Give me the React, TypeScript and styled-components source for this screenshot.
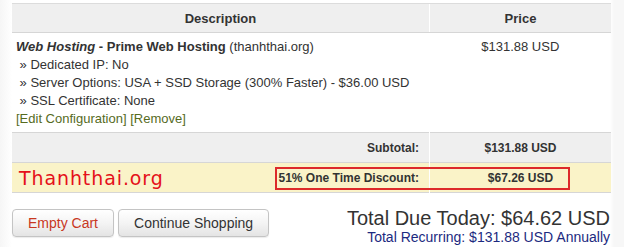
import React from "react";
import styled, { createGlobalStyle } from "styled-components";

const Global = createGlobalStyle`
  html, body { margin: 0; padding: 0; }
  body {
    font-family: "Liberation Sans", Arial, sans-serif;
    color: #333;
    background: linear-gradient(to right, #f6f6f6 0, #ffffff 12px, #ffffff 610px, #f7f7f7 614px);
    min-height: 247px;
  }
`;

const Page = styled.div`
  width: 598px;
  padding: 3px 0 0 12px;
`;

const Table = styled.table`
  width: 598px;
  border-collapse: collapse;
  table-layout: fixed;
  font-size: 13px;
`;

const Th = styled.th<{ $w: number }>`
  width: ${(p) => p.$w}px;
  background: #efefef;
  border-top: 1px solid #dcdcdc;
  border-bottom: 1px solid #d6d6d6;
  border-left: 1px solid #fff;
  height: 28px;
  padding: 0;
  font-size: 13px;
  font-weight: bold;
  color: #333;
  text-align: center;
  &:first-child { border-left: none; }
`;

const ItemCell = styled.td`
  padding: 5px 4px 4px 4px;
  line-height: 18px;
  vertical-align: top;
  color: #333;
`;

const PriceCell = styled.td`
  padding: 5px 0 4px 0;
  line-height: 18px;
  text-align: center;
  vertical-align: top;
  color: #333;
`;

const Line = styled.div``;

const Links = styled.div`
  color: #566b1e;
`;

const TotalRow = styled.tr<{ $bg: string }>`
  background: ${(p) => p.$bg};
  border-top: 1px solid #d6d6d6;
  border-bottom: 1px solid #d6d6d6;
`;

const LabelCell = styled.td`
  height: 29px;
  padding: 0 10px 0 7px;
  text-align: right;
  font-size: 12px;
  font-weight: bold;
  color: #333;
  vertical-align: middle;
`;

const AmountCell = styled.td`
  height: 29px;
  padding: 0;
  text-align: center;
  font-size: 12px;
  font-weight: bold;
  color: #333;
  border-left: 1px solid #fff;
  vertical-align: middle;
`;

const LabelInner = styled.div`
  display: flex;
  align-items: center;
  justify-content: space-between;
  position: relative;
  height: 24px;
`;

const Brand = styled.span`
  font-family: "DejaVu Sans", Verdana, sans-serif;
  font-weight: normal;
  font-size: 19px;
  letter-spacing: 0.9px;
  color: #e5101a;
  line-height: 24px;
`;

const Highlight = styled.div`
  position: absolute;
  box-sizing: border-box;
  left: 256px;
  top: 1px;
  width: 295px;
  height: 23px;
  border: 2px solid #dd2a2a;
  pointer-events: none;
`;

const Bottom = styled.div`
  display: flex;
  justify-content: space-between;
  align-items: flex-start;
  margin-top: 14px;
`;

const Buttons = styled.div`
  display: flex;
  gap: 4px;
  margin-top: 2px;
`;

const Button = styled.button<{ $danger?: boolean }>`
  height: 28px;
  padding: 0 15px;
  border: 1px solid #c4c4c4;
  border-radius: 4px;
  background: linear-gradient(to bottom, #ffffff 0%, #f4f4f4 50%, #e4e4e4 100%);
  box-shadow: 0 1px 1px rgba(0, 0, 0, 0.08);
  font-family: "Liberation Sans", Arial, sans-serif;
  font-size: 14px;
  color: ${(p) => (p.$danger ? "#c8371f" : "#333")};
  cursor: pointer;
`;

const Totals = styled.div`
  text-align: right;
`;

const DueToday = styled.div`
  font-size: 20px;
  line-height: 22px;
  color: #333;
`;

const Recurring = styled.div`
  font-size: 14px;
  line-height: 16px;
  color: #1c2a80;
`;

export default function App() {
  return (
    <>
      <Global />
      <Page>
        <Table>
          <thead>
            <tr>
              <Th $w={417}>Description</Th>
              <Th $w={181}>Price</Th>
            </tr>
          </thead>
          <tbody>
            <tr>
              <ItemCell>
                <Line>
                  <b>
                    <i>Web Hosting</i> - Prime Web Hosting
                  </b>{" "}
                  (thanhthai.org)
                </Line>
                <Line>{"\u00a0» Dedicated IP: No"}</Line>
                <Line>{"\u00a0» Server Options: USA + SSD Storage (300% Faster) - $36.00 USD"}</Line>
                <Line>{"\u00a0» SSL Certificate: None"}</Line>
                <Links>[Edit Configuration] [Remove]</Links>
              </ItemCell>
              <PriceCell>$131.88 USD</PriceCell>
            </tr>
            <TotalRow $bg="#efefef">
              <LabelCell>Subtotal:</LabelCell>
              <AmountCell>$131.88 USD</AmountCell>
            </TotalRow>
            <TotalRow $bg="#faf3c8">
              <LabelCell>
                <LabelInner>
                  <Brand>Thanhthai.org</Brand>
                  <span>51% One Time Discount:</span>
                  <Highlight />
                </LabelInner>
              </LabelCell>
              <AmountCell>$67.26 USD</AmountCell>
            </TotalRow>
          </tbody>
        </Table>
        <Bottom>
          <Buttons>
            <Button $danger>Empty Cart</Button>
            <Button>Continue Shopping</Button>
          </Buttons>
          <Totals>
            <DueToday>Total Due Today: $64.62 USD</DueToday>
            <Recurring>Total Recurring: $131.88 USD Annually</Recurring>
          </Totals>
        </Bottom>
      </Page>
    </>
  );
}
